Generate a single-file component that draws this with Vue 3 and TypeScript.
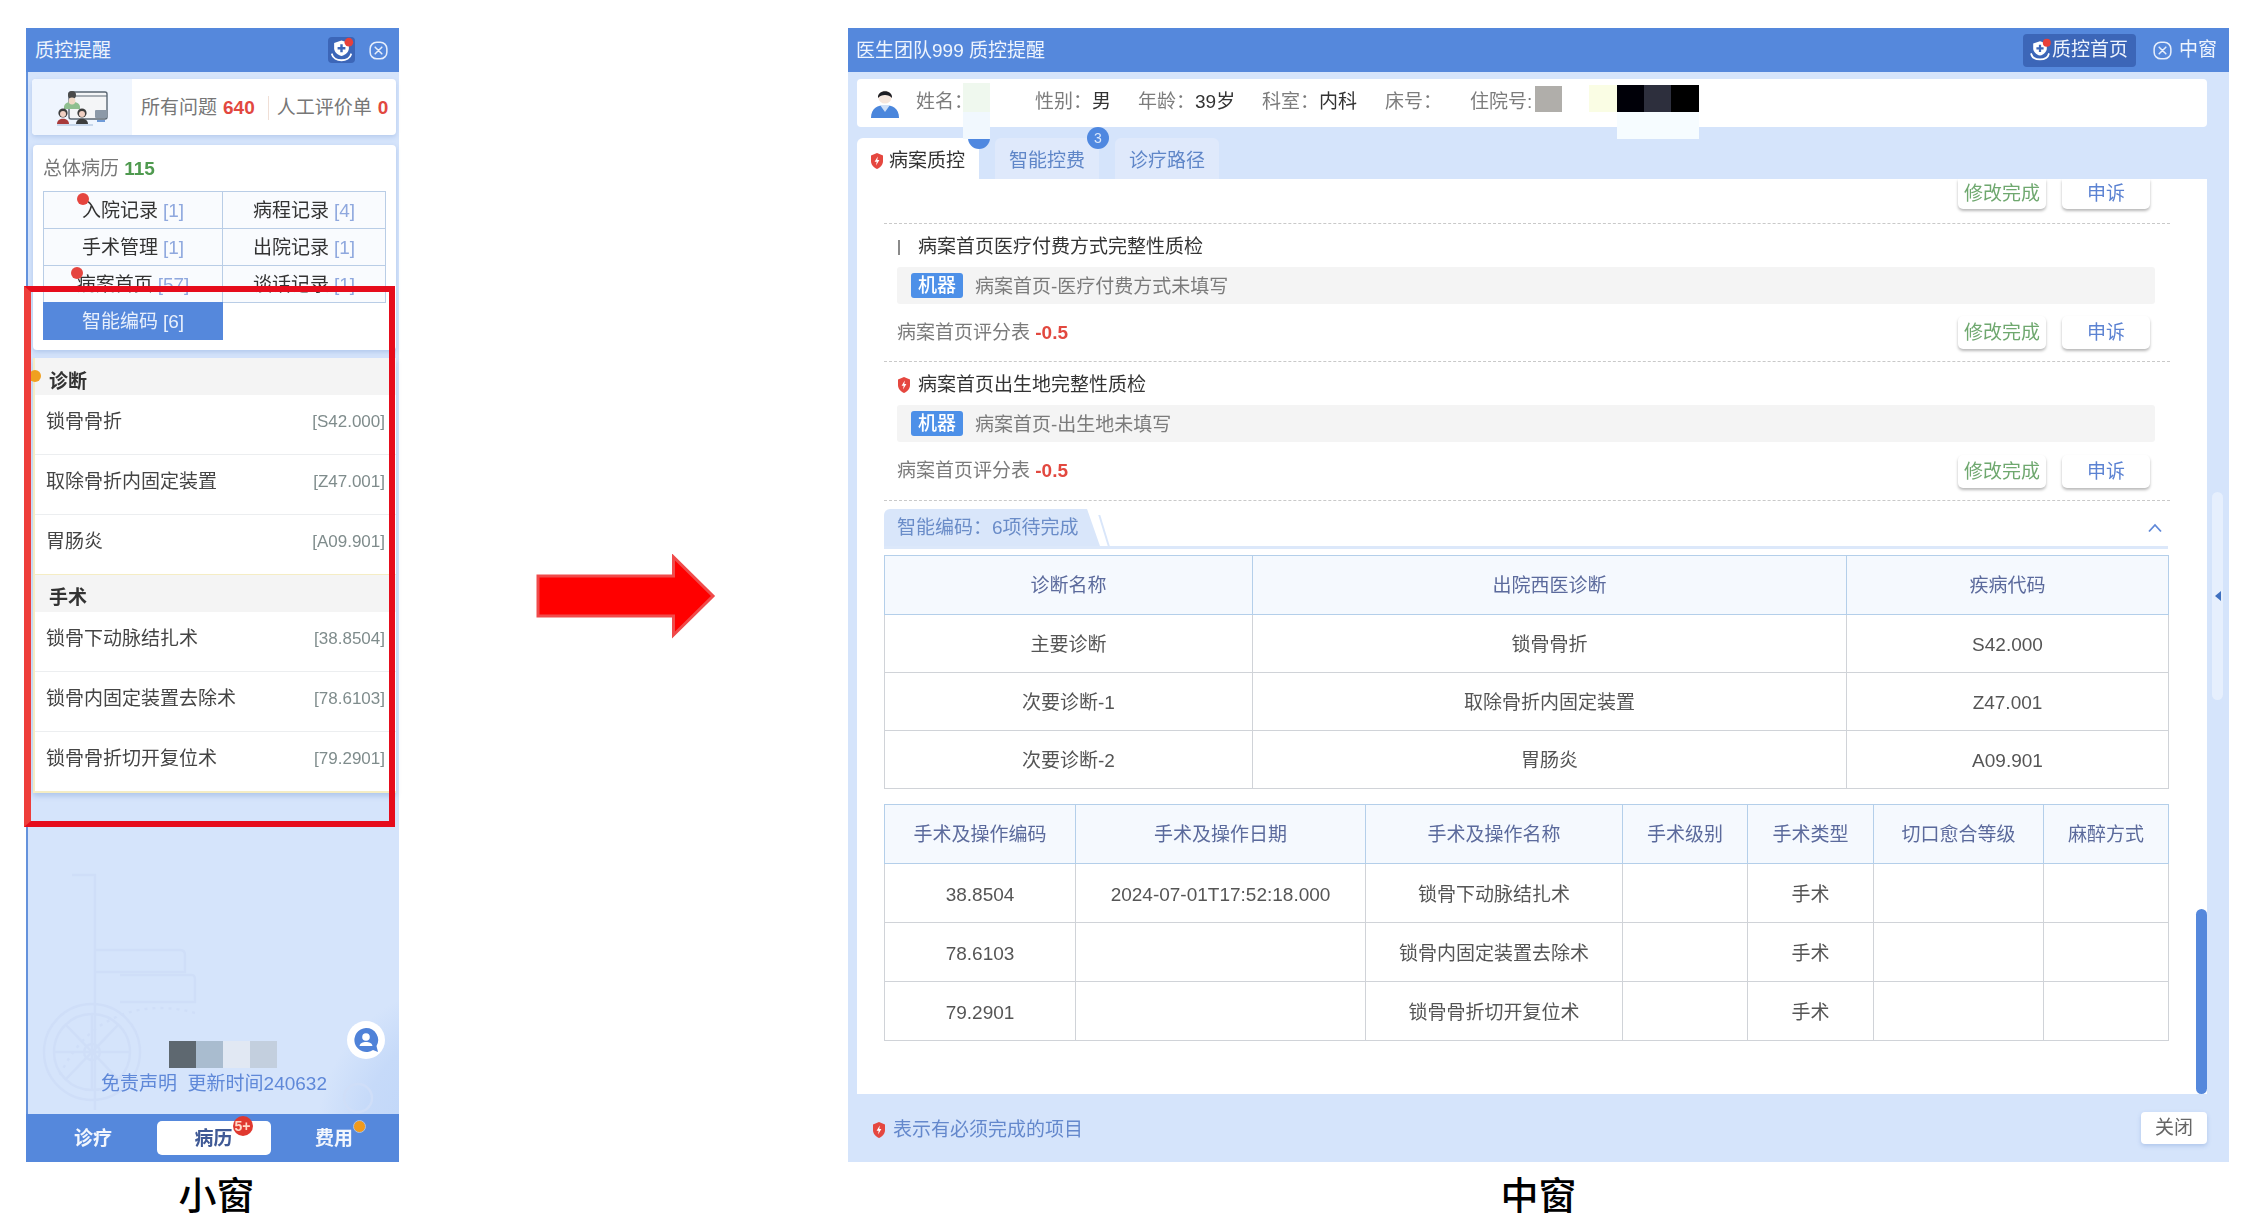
<script setup lang="ts">
interface Cell { name: string; n: string; dot?: string; active?: boolean }
const cells: Cell[] = [
  { name: '入院记录', n: '[1]', dot: 'dot-a' },
  { name: '病程记录', n: '[4]' },
  { name: '手术管理', n: '[1]' },
  { name: '出院记录', n: '[1]' },
  { name: '病案首页', n: '[57]', dot: 'dot-b' },
  { name: '谈话记录', n: '[1]' },
  { name: '智能编码', n: '[6]', active: true },
]
const diag = [
  { name: '锁骨骨折', code: '[S42.000]' },
  { name: '取除骨折内固定装置', code: '[Z47.001]' },
  { name: '胃肠炎', code: '[A09.901]' },
]
const ops = [
  { name: '锁骨下动脉结扎术', code: '[38.8504]' },
  { name: '锁骨内固定装置去除术', code: '[78.6103]' },
  { name: '锁骨骨折切开复位术', code: '[79.2901]' },
]
const items = [
  { title: '病案首页医疗付费方式完整性质检', msg: '病案首页-医疗付费方式未填写', must: false },
  { title: '病案首页出生地完整性质检', msg: '病案首页-出生地未填写', must: true },
]
const t1Head = ['诊断名称', '出院西医诊断', '疾病代码']
const t1Rows = [
  ['主要诊断', '锁骨骨折', 'S42.000'],
  ['次要诊断-1', '取除骨折内固定装置', 'Z47.001'],
  ['次要诊断-2', '胃肠炎', 'A09.901'],
]
const t2Head = ['手术及操作编码', '手术及操作日期', '手术及操作名称', '手术级别', '手术类型', '切口愈合等级', '麻醉方式']
const t2Rows = [
  ['38.8504', '2024-07-01T17:52:18.000', '锁骨下动脉结扎术', '', '手术', '', ''],
  ['78.6103', '', '锁骨内固定装置去除术', '', '手术', '', ''],
  ['79.2901', '', '锁骨骨折切开复位术', '', '手术', '', ''],
]
const t1Cols = [368, 594, 322]
const t2Cols = [191, 290, 257, 125, 126, 170, 125]
</script>

<template>
  <div class="page">
    <svg class="defs" aria-hidden="true">
      <symbol id="shield" viewBox="0 0 12 16">
        <path d="M6 0 L12 2.4 V8 C12 12 9 14.8 6 16 C3 14.8 0 12 0 8 V2.4 Z" fill="#e5473f" />
        <path d="M6.8 3.5 L3.6 8.8 H5.7 L5 12.5 L8.4 7 H6.3 Z" fill="#fff" />
      </symbol>
      <symbol id="logo" viewBox="0 0 30 30">
        <path d="M15 4 L23.5 6.8 V13 C23.5 17 20 20.5 15 22 C10 20.5 6.5 17 6.5 13 V6.8 Z" fill="#fff" />
        <path d="M15 8.5 V17.5 M10.5 13 H19.5" stroke="#3c66b8" stroke-width="2.8" fill="none" />
        <path d="M4 20 C6 29 24 29 26 20" stroke="#fff" stroke-width="2.2" fill="none" stroke-linecap="round" />
        <circle cx="23.5" cy="6" r="5" fill="#e8403a" />
      </symbol>
      <symbol id="close" viewBox="0 0 20 20">
        <rect x="1.2" y="1.2" width="17.6" height="17.6" rx="7" fill="none" stroke="#e6eefb" stroke-width="1.6" />
        <path d="M6.5 6.5 L13.5 13.5 M13.5 6.5 L6.5 13.5" stroke="#e6eefb" stroke-width="1.6" stroke-linecap="round" />
      </symbol>
    </svg>

    <section class="col col-small">
      <div class="win small">
        <svg class="watermark" viewBox="26 860 373 254" aria-hidden="true">
          <defs>
            <radialGradient id="blob" cx="0.75" cy="0.55" r="0.6">
              <stop offset="0" stop-color="#bcd4f8" />
              <stop offset="0.7" stop-color="#c6daf9" />
              <stop offset="1" stop-color="#d5e4fb" />
            </radialGradient>
          </defs>
          <circle cx="405" cy="1120" r="125" fill="url(#blob)" />
          <g fill="none" stroke="#cfdef8" stroke-width="2.4">
            <path d="M72 875 H95 V1110" />
            <circle cx="92" cy="1052" r="48" />
            <circle cx="92" cy="1052" r="38" />
            <circle cx="92" cy="1052" r="8" />
            <path d="M92 1014 V1090 M55 1052 H130 M66 1025 L118 1079 M118 1025 L66 1079" />
            <path d="M95 950 H180 Q185 950 185 955 V972 H95" />
            <path d="M120 975 H192 Q195 975 195 980 V1002 H120" />
            <path d="M60 1075 C90 1010 150 1000 195 1013" stroke-dasharray="3 5" />
            <circle cx="358" cy="1098" r="14" />
          </g>
        </svg>

        <header class="head">
          <span class="head-title">质控提醒</span>
          <span class="logo-box"><svg class="logo-ico"><use href="#logo" /></svg></span>
          <svg class="close-ico"><use href="#close" /></svg>
        </header>

        <div class="summary">
          <div class="summary-pic">
            <svg width="54" height="38" viewBox="0 0 54 38" aria-hidden="true">
              <rect x="14" y="4" width="38" height="27" rx="2" fill="#f4f5f7" stroke="#5a6672" stroke-width="1.4" />
              <path d="M14 8 H52" stroke="#5a6672" stroke-width="1" />
              <rect x="40" y="22" width="12" height="8" rx="1" fill="#8c99a8" />
              <path d="M42 33 H50" stroke="#6f9bd8" stroke-width="2" />
              <circle cx="17" cy="7" r="4" fill="#4a4a4a" />
              <path d="M9 19 C9 12 25 12 25 19 V21 H9 Z" fill="#8fbf8f" />
              <circle cx="17" cy="13" r="3.4" fill="#f0d8c4" />
              <circle cx="8" cy="25" r="4.6" fill="#3d3d3d" />
              <circle cx="8" cy="26" r="3" fill="#f0cfc2" />
              <path d="M2 36 C2 29 14 29 14 36 Z" fill="#a83a3a" />
              <circle cx="27" cy="25" r="4.6" fill="#3d3d3d" />
              <circle cx="27" cy="26" r="3" fill="#f0cfc2" />
              <path d="M21 36 C21 29 33 29 33 36 Z" fill="#3d3d3d" />
              <path d="M2 37 H38" stroke="#9fb8d8" stroke-width="1" />
            </svg>
          </div>
          <div class="summary-txt">
            <span>所有问题</span><b class="red">640</b><i class="sep"></i>
            <span>人工评价单</span><b class="red">0</b>
          </div>
        </div>

        <div class="records">
          <div class="records-title">总体病历 <b class="green">115</b></div>
          <div class="grid">
            <div v-for="c in cells" :key="c.name" class="cell" :class="{ on: c.active }">
              <i v-if="c.dot" class="dot" :class="c.dot"></i>
              {{ c.name }} <span class="num">{{ c.n }}</span>
            </div>
            <div class="cell blank"></div>
          </div>
        </div>

        <div class="list">
          <i class="warn"></i>
          <div class="sec">诊断</div>
          <div v-for="d in diag" :key="d.code" class="row">
            <span>{{ d.name }}</span><span class="code">{{ d.code }}</span>
          </div>
          <div class="sec sec-line">手术</div>
          <div v-for="d in ops" :key="d.code" class="row">
            <span>{{ d.name }}</span><span class="code">{{ d.code }}</span>
          </div>
        </div>

        <div class="bottom">
          <div class="mosaic"><i class="m1"></i><i class="m2"></i><i class="m3"></i><i class="m4"></i></div>
          <div class="legal">免责声明&nbsp;&nbsp;更新时间240632</div>
        </div>

        <div class="float">
          <svg width="28" height="28" viewBox="0 0 28 28" aria-hidden="true">
            <path d="M14 2 A12 12 0 1 0 21 24 L26 26 L24.5 20 A12 12 0 0 0 14 2 Z" fill="#4f82d8" />
            <circle cx="14" cy="11" r="3.8" fill="#fff" />
            <path d="M7.5 20 C8 14.5 20 14.5 20.5 20 Z" fill="#fff" />
          </svg>
        </div>

        <nav class="nav">
          <div class="nav-i">诊疗</div>
          <div class="nav-i nav-on">病历<i class="badge">5+</i></div>
          <div class="nav-i">费用<i class="orange"></i></div>
        </nav>

        <div class="redbox"></div>
      </div>
      <div class="caption cap-small">小窗</div>
    </section>

    <svg class="arrow" width="180" height="85" viewBox="0 0 180 85" aria-hidden="true">
      <path d="M2 22 H137.5 V3 L177 42 L137.5 81 V62 H2 Z" fill="#ff0000" stroke="#f04a4a" stroke-width="3" />
    </svg>

    <section class="col col-mid">
      <div class="win mid">
        <header class="head">
          <span class="head-title">医生团队999 质控提醒</span>
          <span class="home-btn"><svg class="home-ico"><use href="#logo" /></svg>质控首页</span>
          <span class="mid-close"><svg class="close-ico"><use href="#close" /></svg>中窗</span>
        </header>

        <div class="info">
          <svg class="avatar" width="28" height="30" viewBox="0 0 28 30" aria-hidden="true">
            <path d="M0 30 C0 20 7 17 14 17 C21 17 28 20 28 30 Z" fill="#4a86dc" />
            <path d="M9 17 L14 24 L19 17 Z" fill="#cfe0f8" />
            <circle cx="14" cy="9" r="6.6" fill="#f6e6dc" />
            <path d="M7 10 C6 1 22 1 21 10 C18 6 10 6 7 10 Z" fill="#1d1d22" />
          </svg>
          <div class="fields">
            <div><span>姓名：</span></div>
            <div><span>性别：</span><b>男</b></div>
            <div><span>年龄：</span><b>39岁</b></div>
            <div><span>科室：</span><b>内科</b></div>
            <div><span>床号：</span></div>
            <div><span>住院号:</span></div>
          </div>
        </div>

        <div class="tabs">
          <div class="tab tab-on"><svg class="shield"><use href="#shield" /></svg>病案质控<i class="tab-badge peek"></i></div>
          <div class="tab">智能控费<i class="tab-badge">3</i></div>
          <div class="tab">诊疗路径</div>
        </div>

        <main class="content">
          <div class="top-actions">
            <button class="btn ok cut">修改完成</button>
            <button class="btn ap cut">申诉</button>
          </div>

          <article v-for="it in items" :key="it.title" class="item">
            <h4 class="item-title">
              <svg v-if="it.must" class="shield"><use href="#shield" /></svg>
              <i v-else class="bar"></i>
              <span>{{ it.title }}</span>
            </h4>
            <div class="msg"><em class="tag">机器</em><span class="msg-txt">{{ it.msg }}</span></div>
            <div class="score">
              <span>病案首页评分表 <b class="red">-0.5</b></span>
              <div class="score-btns">
                <button class="btn ok">修改完成</button>
                <button class="btn ap">申诉</button>
              </div>
            </div>
          </article>

          <div class="fold">
            <div class="fold-tab">智能编码：6项待完成</div>
            <i class="fold-slant"></i>
            <svg class="chev" width="16" height="10" viewBox="0 0 16 10" aria-hidden="true">
              <path d="M2 8.5 L8 2 L14 8.5" fill="none" stroke="#5f88d8" stroke-width="1.8" />
            </svg>
          </div>

          <table class="tbl t1">
            <colgroup><col v-for="(w, i) in t1Cols" :key="i" :width="w" /></colgroup>
            <thead><tr><th v-for="h in t1Head" :key="h">{{ h }}</th></tr></thead>
            <tbody>
              <tr v-for="r in t1Rows" :key="r[0]"><td v-for="(c, i) in r" :key="i">{{ c }}</td></tr>
            </tbody>
          </table>

          <table class="tbl t2">
            <colgroup><col v-for="(w, i) in t2Cols" :key="i" :width="w" /></colgroup>
            <thead><tr><th v-for="h in t2Head" :key="h">{{ h }}</th></tr></thead>
            <tbody>
              <tr v-for="r in t2Rows" :key="r[0]"><td v-for="(c, i) in r" :key="i">{{ c }}</td></tr>
            </tbody>
          </table>

          <i class="thumb"></i>
        </main>

        <footer class="foot">
          <svg class="shield"><use href="#shield" /></svg>
          <span class="foot-txt">表示有必须完成的项目</span>
          <button class="foot-btn">关闭</button>
        </footer>

        <div class="handle"><i></i></div>

        <div class="cover c-name"></div>
        <div class="cover c-name2"></div>
        <div class="cover c-no1"></div>
        <div class="cover c-no2"></div>
        <div class="cover c-k1"></div>
        <div class="cover c-k2"></div>
        <div class="cover c-k3"></div>
        <div class="cover c-k4"></div>
      </div>
      <div class="caption">中窗</div>
    </section>
  </div>
</template>

<style scoped>
.page {
  display: flex;
  align-items: flex-start;
  width: 2250px;
  height: 1232px;
  box-sizing: border-box;
  padding: 28px 0 0 26px;
  overflow: hidden;
  background: #fff;
  font-family: "Liberation Sans", "Noto Sans CJK SC", sans-serif;
  font-size: 19px;
  line-height: 24px;
  color: #333;
}
.defs { position: absolute; width: 0; height: 0; }
i, em { font-style: normal; }
.col-small { width: 373px; flex: none; }
.col-mid { width: 1381px; flex: none; margin-left: 132px; }
.arrow { flex: none; margin: 526px 0 0 137px; }
.caption {
  margin-top: 11px;
  text-align: center;
  font-family: "Noto Sans CJK SC", sans-serif;
  font-size: 38px;
  line-height: 40px;
  font-weight: 500;
  color: #000;
}
.cap-small { padding-left: 8px; }

.win {
  position: relative;
  height: 1134px;
  display: flex;
  flex-direction: column;
  background: #d5e4fb;
  filter: blur(0.45px);
}
.head {
  height: 44px;
  flex: none;
  box-sizing: border-box;
  display: flex;
  align-items: center;
  background: #5588dc;
  color: #eef4fd;
  padding-left: 9px;
}
.head-title { flex: 1; padding-top: 2px; }
.close-ico { width: 19px; height: 19px; flex: none; }

/* small window */
.small { border-left: 2px solid #6492dc; box-sizing: border-box; }
.small .head { margin-left: -2px; }
.watermark { position: absolute; left: -2px; top: 832px; width: 373px; height: 254px; }
.logo-box {
  width: 27px;
  height: 26px;
  margin-right: 14px;
  border-radius: 4px;
  background: #3c66b8;
  display: flex;
}
.logo-ico { width: 27px; height: 26px; }
.small .close-ico { margin-right: 11px; }

.summary {
  position: relative;
  height: 56px;
  margin: 7px 3px 0 4px;
  display: flex;
  background: #fff;
  border-radius: 4px;
  box-shadow: 0 2px 4px rgba(90, 130, 200, .25);
  overflow: hidden;
}
.summary-pic {
  width: 100px;
  flex: none;
  display: flex;
  align-items: center;
  justify-content: center;
  background: #eff5fe;
}
.summary-txt { display: flex; align-items: center; padding: 2px 0 0 9px; color: #777; white-space: nowrap; }
.summary-txt b { margin-left: 6px; }
.sep { width: 1px; height: 24px; background: #f0dfd6; margin: 0 8px 0 13px; }
.red { color: #e2483f; font-weight: 700; }
.green { color: #4f9a4f; font-weight: 700; }

.records {
  position: relative;
  height: 205px;
  margin: 10px 3px 0 5px;
  background: #fff;
  border-radius: 4px;
  box-shadow: 0 2px 5px rgba(90, 130, 200, .3);
}
.records-title { height: 46px; padding-left: 10px; line-height: 48px; color: #777; }
.grid {
  display: grid;
  grid-template-columns: 179px 163px;
  grid-auto-rows: 37px;
  margin-left: 10px;
}
.cell {
  position: relative;
  border: 1px solid #b9cde6;
  margin: 0 -1px -1px 0;
  padding-top: 2px;
  box-sizing: border-box;
  display: flex;
  align-items: center;
  justify-content: center;
  gap: 5px;
  background: #f9fbfe;
  color: #333;
}
.num { color: #8fa8de; }
.cell.on { background: #5588dc; border-color: #5588dc; color: #e8f0fc; }
.cell.on .num { color: #e8f0fc; }
.cell.blank { border: none; background: none; }
.dot { position: absolute; width: 12px; height: 12px; border-radius: 50%; background: #e5453f; }
.dot-a { left: 33px; top: 1px; }
.dot-b { left: 27px; top: 1px; }

.list {
  position: relative;
  margin: 8px 3px 0 5px;
  background: #fff;
  border-left: 2px solid #f5edc4;
  border-bottom: 2px solid #f5edc4;
  box-shadow: 0 3px 5px rgba(90, 130, 200, .3);
}
.warn { position: absolute; left: -6px; top: 12px; width: 12px; height: 12px; border-radius: 50%; background: #f0a020; }
.sec {
  height: 37px;
  padding: 12px 0 0 14px;
  box-sizing: border-box;
  background: #f4f4f4;
  font-weight: 700;
  color: #333;
}
.sec-line { border-top: 1px solid #f5edc4; height: 38px; padding-top: 11px; }
.row {
  height: 60px;
  box-sizing: border-box;
  padding: 15px 11px 0 11px;
  display: flex;
  justify-content: space-between;
  border-top: 1px solid #eceef0;
  color: #444;
}
.sec + .row { border-top: none; height: 59px; }
.code { font-size: 17px; color: #7f8c8c; }

.bottom { flex: 1; display: flex; flex-direction: column; justify-content: flex-end; position: relative; padding-bottom: 21px; }
.mosaic { display: flex; padding-left: 141px; }
.mosaic i { width: 27px; height: 27px; }
.m1 { background: #5e6870; }
.m2 { background: #a9bccf; }
.m3 { background: #e1e8f3; }
.m4 { background: #c3cfde; }
.legal { height: 25px; line-height: 32px; text-align: center; color: #5f88d8; white-space: nowrap; padding-left: 1px; }
.float {
  position: absolute;
  left: 319px;
  top: 993px;
  width: 38px;
  height: 38px;
  border-radius: 50%;
  background: #fff;
  display: flex;
  align-items: center;
  justify-content: center;
}
.nav {
  position: relative;
  height: 48px;
  margin-left: -2px;
  box-sizing: border-box;
  padding: 7px 0 0 10px;
  background: #5588dc;
  display: grid;
  grid-template-columns: repeat(3, 114px);
  column-gap: 6.5px;
  align-items: start;
}
.nav-i { position: relative; height: 34px; line-height: 35px; text-align: center; font-weight: 700; color: #f2f6fd; }
.nav-on { background: #fff; border-radius: 5px; color: #405a96; }
.badge {
  position: absolute;
  left: 76px;
  top: -5px;
  width: 20px;
  height: 20px;
  border-radius: 50%;
  background: #e0382f;
  color: #ffd9c8;
  font-size: 14px;
  line-height: 20px;
  font-weight: 700;
}
.orange {
  position: absolute;
  left: 76px;
  top: -1px;
  width: 11px;
  height: 11px;
  border-radius: 50%;
  background: #f09a1c;
  border: 1px solid #a7c0ea;
}
.redbox {
  position: absolute;
  left: -4px;
  top: 258px;
  width: 371px;
  height: 541px;
  box-sizing: border-box;
  border: 6px solid #e60c1c;
  border-left: 7px solid #ee3d3a;
}

/* mid window */
.mid .head-title { flex: 1; }
.mid .head { padding-left: 8px; }
.home-btn {
  width: 113px;
  height: 33px;
  box-sizing: border-box;
  display: flex;
  align-items: center;
  padding-left: 5px;
  border-radius: 4px;
  background: #3c66b8;
  white-space: nowrap;
}
.home-ico { width: 24px; height: 26px; flex: none; }
.mid-close { display: flex; align-items: center; gap: 7px; margin: 0 12px 0 17px; white-space: nowrap; }

.info {
  height: 48px;
  flex: none;
  margin: 7px 22px 0 9px;
  display: flex;
  align-items: center;
  background: #fff;
  border-radius: 4px;
  padding-left: 14px;
}
.avatar { flex: none; margin-right: 17px; }
.fields { display: grid; grid-template-columns: 119px 103px 124px 123px 85px 1fr; flex: 1; padding-bottom: 2px; color: #7c7c7c; }
.fields b { font-weight: 400; color: #333; }

.tabs { display: flex; gap: 16px; margin: 11px 0 0 9px; height: 41px; flex: none; }
.tab {
  position: relative;
  width: 104px;
  display: flex;
  align-items: center;
  justify-content: center;
  box-sizing: border-box;
  padding-top: 4px;
  border-radius: 6px 6px 0 0;
  background: #dfe9fb;
  color: #5f86c8;
}
.tab-on { width: 122px; justify-content: flex-start; padding-left: 14px; background: #fff; color: #333; gap: 6px; }
.tab-badge {
  position: absolute;
  left: 92px;
  top: -11px;
  width: 22px;
  height: 22px;
  border-radius: 50%;
  background: #4f88e0;
  color: #dbe8fb;
  font-size: 14px;
  line-height: 22px;
  text-align: center;
}
.peek { left: 111px; }
.shield { width: 12px; height: 16px; flex: none; }

.content {
  position: relative;
  height: 915px;
  flex: none;
  box-sizing: border-box;
  margin: 0 22px 0 9px;
  padding: 0 37px 0 27px;
  background: #fff;
  overflow: hidden;
}
.top-actions {
  height: 45px;
  box-sizing: border-box;
  display: flex;
  justify-content: flex-end;
  gap: 16px;
  padding-right: 20px;
  border-bottom: 1px dashed #c9c9c9;
}
.btn {
  width: 88px;
  height: 33px;
  padding: 0;
  border: none;
  border-radius: 5px;
  background: #fff;
  box-shadow: 0 2px 3px rgba(0, 0, 0, .28);
  font: inherit;
  line-height: 33px;
}
.cut { height: 30px; line-height: 26px; border-radius: 0 0 5px 5px; }
.ok { color: #6fa86f; }
.ap { color: #5b82d2; }

.item-title {
  height: 43px;
  margin: 0;
  padding: 3px 0 0 14px;
  box-sizing: border-box;
  display: flex;
  align-items: center;
  gap: 8px;
  font-size: 19px;
  font-weight: 400;
  color: #333;
}
.bar { width: 2px; height: 15px; margin-right: 10px; background: #8a8a8a; }
.msg {
  height: 37px;
  margin: 0 15px 0 13px;
  padding-left: 14px;
  display: flex;
  align-items: center;
  background: #f4f4f4;
  border-radius: 3px;
  color: #7b7b7b;
}
.msg-txt { padding-top: 2px; }
.tag {
  width: 52px;
  height: 25px;
  margin-right: 12px;
  border-radius: 3px;
  background: #4d90e8;
  color: #fff;
  line-height: 25px;
  text-align: center;
  font-weight: 500;
}
.score {
  height: 58px;
  padding: 0 20px 0 13px;
  display: flex;
  align-items: center;
  justify-content: space-between;
  border-bottom: 1px dashed #c9c9c9;
  color: #7b7b7b;
}
.score-btns { display: flex; gap: 16px; }
.item:first-of-type .score { height: 57px; }

.fold {
  position: relative;
  height: 40px;
  margin: 8px 2px 6px 0;
  border-bottom: 3px solid #dce8fa;
  box-sizing: border-box;
}
.fold-tab {
  width: 216px;
  height: 37px;
  box-sizing: border-box;
  padding-left: 13px;
  line-height: 38px;
  background: #d9e6fa;
  border-radius: 6px 0 0 0;
  color: #6a8cc8;
  clip-path: polygon(0 0, 94% 0, 100% 100%, 0 100%);
}
.fold-slant { position: absolute; left: 219px; top: 6px; width: 2px; height: 31px; background: #d9e6fa; transform: skewX(17deg); }
.chev { position: absolute; right: 5px; top: 14px; }

.tbl {
  width: 1284px;
  table-layout: fixed;
  border-collapse: collapse;
  text-align: center;
  color: #555;
}
.t2 { margin-top: 15px; }
.tbl th {
  height: 59px;
  padding: 2px 0 0;
  box-sizing: border-box;
  font-weight: 400;
  background: #f5f9fe;
  border: 1px solid #b4cfea;
  color: #5b6a9c;
}
.tbl td {
  height: 59px;
  padding: 3px 0 0;
  box-sizing: border-box;
  border: 1px solid #d0d3d8;
}
.t1 td { height: 58px; }
.thumb {
  position: absolute;
  right: 0;
  top: 730px;
  width: 11px;
  height: 185px;
  border-radius: 6px;
  background: #5588dc;
}

.foot {
  flex: 1;
  display: flex;
  align-items: center;
  padding: 0 22px 0 25px;
}
.foot > .shield { margin-top: 3px; }
.foot-txt { flex: 1; margin: 4px 0 0 8px; color: #6488cc; }
.foot-btn {
  width: 66px;
  height: 32px;
  padding: 0;
  border: none;
  border-radius: 4px;
  background: #fff;
  box-shadow: 0 2px 4px rgba(90, 130, 200, .3);
  font: inherit;
  color: #666;
}
.handle {
  position: absolute;
  left: 1364px;
  top: 464px;
  width: 11px;
  height: 208px;
  border-radius: 6px;
  background: #e6effd;
  display: flex;
  align-items: center;
  justify-content: center;
}
.handle i {
  width: 0;
  height: 0;
  border-top: 5px solid transparent;
  border-bottom: 5px solid transparent;
  border-right: 6px solid #3f70c0;
}

.cover { position: absolute; }
.c-name { left: 115px; top: 55px; width: 27px; height: 29px; background: #eff8ee; }
.c-name2 { left: 115px; top: 84px; width: 27px; height: 27px; background: #f1f8fe; }
.c-no1 { left: 687px; top: 58px; width: 27px; height: 26px; background: #b0aeaa; }
.c-no2 { left: 741px; top: 57px; width: 28px; height: 27px; background: #fafde4; }
.c-k1 { left: 769px; top: 57px; width: 27px; height: 27px; background: #000008; }
.c-k2 { left: 796px; top: 57px; width: 27px; height: 27px; background: #2d2f3d; }
.c-k3 { left: 823px; top: 57px; width: 28px; height: 27px; background: #000; }
.c-k4 { left: 769px; top: 84px; width: 82px; height: 27px; background: #f6fcff; }
</style>
